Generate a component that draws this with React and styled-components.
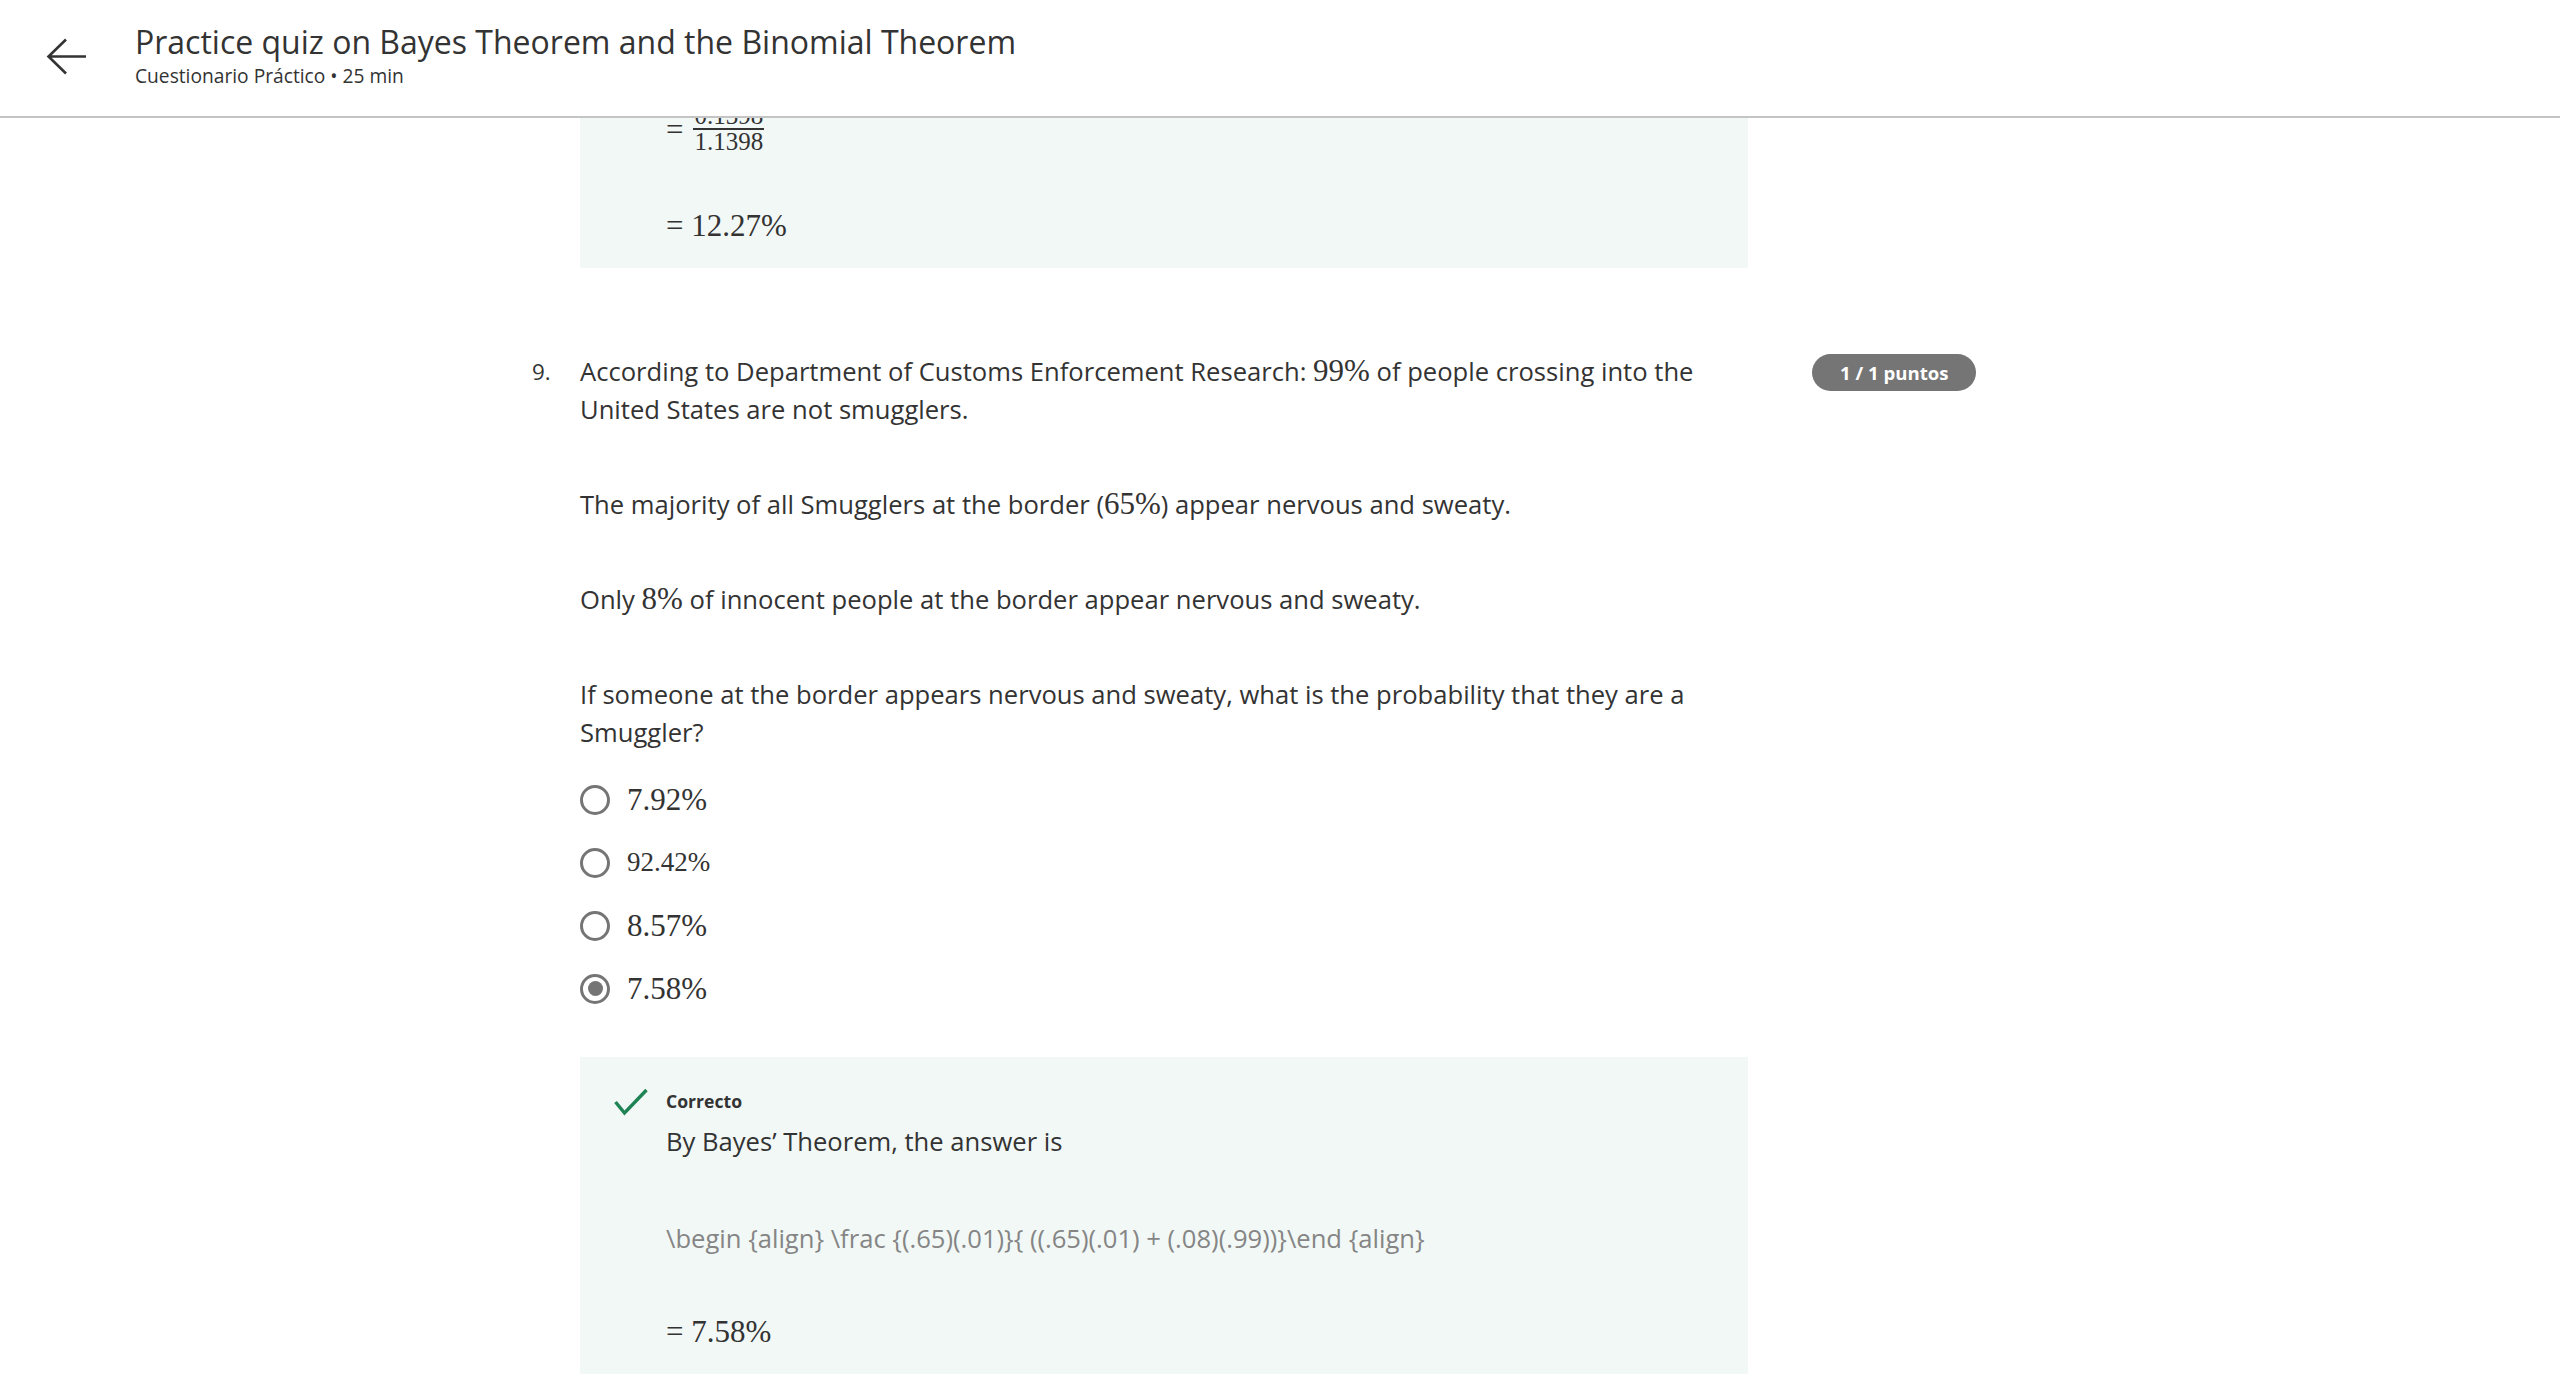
import React, { useLayoutEffect, useRef } from 'react'
import styled, { createGlobalStyle } from 'styled-components'

const GlobalStyle = createGlobalStyle`
  html, body {
    margin: 0;
    padding: 0;
    background: #fff;
  }
  body {
    font-family: "Open Sans", "Noto Sans", sans-serif;
    color: #333;
  }
  * { box-sizing: border-box; }
`

const options = [
  { label: '7.92%', size: 31 },
  { label: '92.42%', size: 27 },
  { label: '8.57%', size: 31 },
  { label: '7.58%', size: 31, checked: true },
]

const BackArrow = () => (
  <svg width="42" height="40" viewBox="0 0 42 40" fill="none">
    <path d="M40 18.5 H3 M20 1.5 L2.5 18.5 L20 35.5" stroke="#333" strokeWidth="2.6" />
  </svg>
)

const CheckIcon = () => (
  <svg width="36" height="28" viewBox="0 0 36 28" fill="none">
    <path d="M2.5 14 L11.5 25 L33.5 2" stroke="#1f8354" strokeWidth="3.4" />
  </svg>
)

const Feedback = ({ children }) => (
  <FeedbackBox>
    <IconCell><CheckIcon /></IconCell>
    <FeedbackBody>
      <FeedbackTitle>Correcto</FeedbackTitle>
      {children}
    </FeedbackBody>
  </FeedbackBox>
)

const App = () => {
  const mainRef = useRef(null)
  const prevRef = useRef(null)

  // the page is scrolled so that the end of the previous answer sits under the header
  useLayoutEffect(() => {
    const main = mainRef.current
    const box = prevRef.current
    if (!main || !box) return
    const delta = box.getBoundingClientRect().bottom - 268
    main.scrollTop += delta
  }, [])

  return (
    <Page>
      <GlobalStyle />
      <Header>
        <BackButton aria-label="Volver"><BackArrow /></BackButton>
        <TitleBlock>
          <Title>Practice quiz on Bayes Theorem and the Binomial Theorem</Title>
          <Subtitle>Cuestionario Práctico • 25 min</Subtitle>
        </TitleBlock>
      </Header>

      <Main ref={mainRef}>
        <Content>
          <QuestionItem>
            <span />
            <div ref={prevRef}>
              <Feedback>
                <Para>By Bayes’ Theorem, the answer is</Para>
                <Raw>\begin {'{align}'} \frac {'{(.1)(.92)}{ ((.1)(.92) + (.9)(.02))}'}\end {'{align}'}</Raw>
                <MathLine>
                  <M>=</M>
                  <Frac>
                    <Num>0.1398</Num>
                    <Den>1.1398</Den>
                  </Frac>
                </MathLine>
                <MathLine $gap={52}><M>= 12.27%</M></MathLine>
              </Feedback>
            </div>
          </QuestionItem>

          <QuestionItem $spaced>
            <Number>9.</Number>
            <div>
              <Para>
                According to Department of Customs Enforcement Research: <M>99%</M> of people crossing into the United States are not smugglers.
              </Para>
              <Para>The majority of all Smugglers at the border (<M>65%</M>) appear nervous and sweaty.</Para>
              <Para>Only <M>8%</M> of innocent people at the border appear nervous and sweaty.</Para>
              <Para>If someone at the border appears nervous and sweaty, what is the probability that they are a Smuggler?</Para>

              <OptionList>
                {options.map((o) => (
                  <OptionRow key={o.label}>
                    <Radio $checked={o.checked} />
                    <M $size={o.size}>{o.label}</M>
                  </OptionRow>
                ))}
              </OptionList>

              <Feedback>
                <Para>By Bayes’ Theorem, the answer is</Para>
                <Raw>\begin {'{align}'} \frac {'{(.65)(.01)}{ ((.65)(.01) + (.08)(.99))}'}\end {'{align}'}</Raw>
                <MathLine $gap={54}><M>= 7.58%</M></MathLine>
              </Feedback>
            </div>
            <Badge>1 / 1 puntos</Badge>
          </QuestionItem>
        </Content>
      </Main>
    </Page>
  )
}

export default App

const Page = styled.div`
  display: flex;
  flex-direction: column;
  height: 100vh;
  overflow: hidden;
`

const Header = styled.header`
  flex: none;
  height: 118px;
  display: flex;
  align-items: center;
  padding: 0 0 0 46px;
  border-bottom: 2px solid #c4c4c4;
  background: #fff;
`

const BackButton = styled.button`
  border: 0;
  background: none;
  padding: 0;
  width: 42px;
  height: 40px;
  margin-top: -1px;
  display: flex;
  cursor: pointer;
`

const TitleBlock = styled.div`
  margin-left: 47px;
  display: flex;
  flex-direction: column;
  margin-top: -5px;
`

const Title = styled.h1`
  margin: 0;
  font-size: 32px;
  line-height: 40px;
  font-weight: 400;
  color: #333;
`

const Subtitle = styled.div`
  font-size: 19.2px;
  line-height: 26px;
  margin-top: 1px;
  color: #333;
`

const Main = styled.main`
  flex: 1;
  overflow-y: auto;
  scrollbar-width: none;
  &::-webkit-scrollbar { display: none; }
`

const Content = styled.div`
  padding: 40px 0 160px 532px;
`

const QuestionItem = styled.section`
  display: grid;
  grid-template-columns: 48px 1168px max-content;
  align-items: start;
  margin-top: ${(p) => (p.$spaced ? '85px' : '0')};
`

const Number = styled.span`
  font-size: 22.4px;
  line-height: 38px;
`

const Para = styled.p`
  margin: 0;
  font-size: 25.6px;
  line-height: 38px;
  color: #333;
  & + & { margin-top: 57px; }
`

const Raw = styled.p`
  margin: 59px 0 0;
  font-size: 25.6px;
  line-height: 38px;
  color: #858585;
`

const M = styled.span`
  font-family: "Liberation Serif", "DejaVu Serif", serif;
  font-size: ${(p) => p.$size || 31}px;
  line-height: 1;
  color: #333;
  white-space: nowrap;
`

const MathLine = styled.div`
  margin-top: ${(p) => p.$gap || 57}px;
  min-height: 38px;
  display: flex;
  align-items: center;
  gap: 10px;
`

const Frac = styled.span`
  display: inline-flex;
  flex-direction: column;
  align-items: center;
  font-family: "Liberation Serif", "DejaVu Serif", serif;
  font-size: 25px;
  line-height: 24px;
  color: #333;
`

const Num = styled.span`
  padding: 0 1px;
  border-bottom: 2px solid #333;
`

const Den = styled.span`
  padding: 0 1px;
`

const OptionList = styled.div`
  margin-top: 16px;
  display: flex;
  flex-direction: column;
`

const OptionRow = styled.label`
  height: 63px;
  display: flex;
  align-items: center;
  gap: 17px;
  cursor: pointer;
`

const Radio = styled.span`
  flex: none;
  width: 30px;
  height: 30px;
  border-radius: 50%;
  border: 3px solid #757575;
  display: flex;
  align-items: center;
  justify-content: center;
  &::after {
    content: '';
    width: 15px;
    height: 15px;
    border-radius: 50%;
    background: #757575;
    display: ${(p) => (p.$checked ? 'block' : 'none')};
  }
`

const Badge = styled.span`
  justify-self: start;
  margin: 1px 0 0 64px;
  height: 37px;
  padding: 0 28px;
  border-radius: 19px;
  background: #757575;
  color: #fff;
  font-size: 18.6px;
  font-weight: 700;
  display: inline-flex;
  align-items: center;
  white-space: nowrap;
`

const FeedbackBox = styled.div`
  margin-top: 37px;
  background: #f2f8f6;
  padding: 30px 32px 24px 33px;
  display: grid;
  grid-template-columns: 34px 1fr;
  column-gap: 19px;
`

const IconCell = styled.span`
  padding-top: 1px;
`

const FeedbackBody = styled.div`
  display: flex;
  flex-direction: column;
`

const FeedbackTitle = styled.div`
  font-size: 17.6px;
  line-height: 28px;
  font-weight: 700;
  color: #333;
  margin-bottom: 8px;
`
